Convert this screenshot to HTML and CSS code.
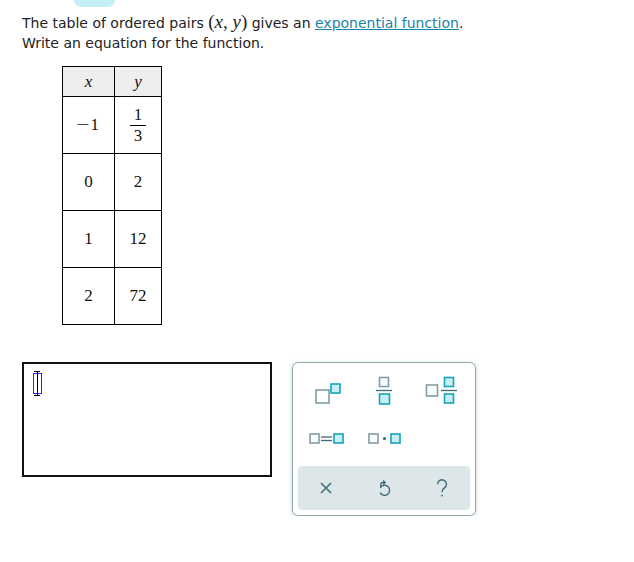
FILE: index.html
```html
<!DOCTYPE html>
<html>
<head>
<meta charset="utf-8">
<link rel="stylesheet" href="styles.css">
</head>
<body>
<div class="tab"></div>
<div class="prompt">
  <p>The table of ordered pairs <span class="math">(<i>x</i>, <i>y</i>)</span> gives an <a href="#" class="link">exponential function</a>.</p>
  <p>Write an equation for the function.</p>
</div>
<table class="pairs">
  <tr class="head"><th><i>x</i></th><th><i>y</i></th></tr>
  <tr><td><span class="minus">&minus;</span>1</td><td><span class="frac"><span class="num">1</span><span class="den">3</span></span></td></tr>
  <tr><td>0</td><td>2</td></tr>
  <tr><td>1</td><td>12</td></tr>
  <tr><td>2</td><td>72</td></tr>
</table>
<div class="work">
  <div class="answer">
    <div class="cursor"><span class="cap top"></span><span class="bar"></span><span class="cap bottom"></span></div>
  </div>
  <div class="palette">
    <div class="keys">
      <div class="key">
        <svg width="40" height="34" viewBox="0 0 40 34">
          <rect x="9" y="16" width="13" height="13" class="g"/>
          <rect x="24" y="10" width="9" height="9" class="t"/>
        </svg>
      </div>
      <div class="key">
        <svg width="40" height="34" viewBox="0 0 40 34">
          <rect x="15.5" y="3.5" width="9" height="9" class="g"/>
          <line x1="12" y1="16.5" x2="28" y2="16.5" class="ln"/>
          <rect x="15.5" y="20" width="10" height="10" class="t"/>
        </svg>
      </div>
      <div class="key">
        <svg width="40" height="34" viewBox="0 0 40 34">
          <rect x="5.5" y="11" width="11" height="11" class="g"/>
          <rect x="23.5" y="3.5" width="9" height="9" class="t"/>
          <line x1="20" y1="16.5" x2="36" y2="16.5" class="ln"/>
          <rect x="23.5" y="20" width="9" height="9" class="t"/>
        </svg>
      </div>
      <div class="key">
        <svg width="40" height="16" viewBox="0 0 40 16">
          <rect x="3" y="3" width="9" height="9" class="g"/>
          <line x1="14" y1="6" x2="25" y2="6" class="ln"/>
          <line x1="14" y1="9.5" x2="25" y2="9.5" class="ln"/>
          <rect x="27" y="3" width="9" height="9" class="t"/>
        </svg>
      </div>
      <div class="key">
        <svg width="40" height="16" viewBox="0 0 40 16">
          <rect x="5" y="3" width="9" height="9" class="g"/>
          <circle cx="20.5" cy="7.5" r="1.6" fill="#3d6a78"/>
          <rect x="27" y="3" width="9" height="9" class="t"/>
        </svg>
      </div>
      <div class="key"></div>
    </div>
    <div class="tools">
      <svg width="14" height="14" viewBox="0 0 14 14"><path d="M2 2 L12 12 M12 2 L2 12" stroke="#3d6a78" stroke-width="1.5" fill="none"/></svg>
      <svg width="16" height="18" viewBox="0 0 16 18"><path d="M5.2 3.6 L9 3.6 M5.2 3.6 L4.6 8.4 A5 5 0 1 1 4.2 13.6" stroke="#3d6a78" stroke-width="1.4" fill="none" stroke-linejoin="round"/><path d="M7 1.6 L9.2 3.6 L7 5.6" stroke="#3d6a78" stroke-width="1.4" fill="none" stroke-linejoin="round"/></svg>
      <svg width="14" height="19" viewBox="0 0 14 19"><path d="M2.6 5.2 A4.4 4.4 0 1 1 9.4 8.9 C7.6 10 7 10.8 7 13.2" stroke="#3d6a78" stroke-width="1.4" fill="none"/><circle cx="7" cy="16.6" r="0.95" fill="#3d6a78"/></svg>
    </div>
  </div>
</div>
</body>
</html>
```

FILE: styles.css
```css
html, body {
  margin: 0;
  padding: 0;
  background: #fff;
}
body {
  padding: 0 0 0 22px;
  font-family: "DejaVu Sans", Verdana, sans-serif;
  font-size: 14px;
  color: #222;
}
.tab {
  width: 41px;
  height: 7px;
  margin-left: 52px;
  background: #c6eef5;
  border-radius: 0 0 9px 9px;
}
.prompt {
  margin-top: 5px;
}
.prompt p {
  margin: 0;
  line-height: 20px;
}
.math {
  font-family: "Liberation Serif", "Times New Roman", serif;
  font-size: 19px;
}
.link {
  color: #1a84a8;
  text-decoration: underline;
}
.pairs {
  margin: 13px 0 0 40px;
  border-collapse: collapse;
  font-family: "Liberation Serif", "Times New Roman", serif;
  font-size: 17px;
  color: #111;
}
.pairs th, .pairs td {
  border: 1px solid #000;
  text-align: center;
  padding: 0;
}
.pairs th {
  background: #eee;
  font-weight: normal;
  height: 29px;
}
.pairs td {
  height: 56px;
}
.pairs tr th:first-child, .pairs tr td:first-child {
  width: 51px;
}
.pairs tr th:last-child, .pairs tr td:last-child {
  width: 46px;
}
.minus {
  display: inline-block;
  margin-right: 3px;
  transform: scaleX(1.4);
}
.frac {
  display: inline-flex;
  flex-direction: column;
  align-items: center;
  line-height: 18px;
}
.frac .num {
  border-bottom: 1px solid #000;
  padding: 0 4px 1px;
}
.frac .den {
  padding-top: 1px;
}
.work {
  display: flex;
  gap: 20px;
  align-items: flex-start;
  margin-top: 37px;
}
.answer {
  width: 246px;
  height: 111px;
  border: 2px solid #111;
  position: relative;
}
.cursor {
  position: absolute;
  left: 9px;
  top: 9px;
  width: 9px;
  height: 21px;
  border: 1.5px solid #3a1cf5;
  box-sizing: border-box;
}
.cursor .bar {
  position: absolute;
  left: 2.5px;
  top: -2px;
  width: 1.5px;
  height: 23px;
  background: #000;
}
.cursor .cap {
  position: absolute;
  left: 0;
  width: 6px;
  height: 1px;
  background: #000;
}
.cursor .top { top: -3px; }
.cursor .bottom { bottom: -3px; }
.palette {
  width: 182px;
  height: 152px;
  border: 1px solid #8fa9ae;
  border-radius: 6px;
  box-shadow: 0 1px 4px rgba(0, 0, 0, 0.18);
  display: flex;
  flex-direction: column;
}
.keys {
  display: grid;
  grid-template-columns: repeat(3, 1fr);
  grid-template-rows: 44px 52px;
  padding: 6px 6px 0;
  flex: 1;
}
.key {
  display: flex;
  justify-content: center;
  align-items: center;
}
.key svg rect.g {
  fill: #fff;
  stroke: #7f9ea6;
  stroke-width: 1.6;
}
.key svg rect.t {
  fill: #c6f0f6;
  stroke: #17a3b8;
  stroke-width: 1.6;
}
.key svg .ln {
  stroke: #3d6a78;
  stroke-width: 1.3;
}
.tools {
  margin: 0 5px 5px;
  height: 44px;
  background: #dde6e9;
  border-radius: 4px;
  display: flex;
  justify-content: space-around;
  align-items: center;
}
```
